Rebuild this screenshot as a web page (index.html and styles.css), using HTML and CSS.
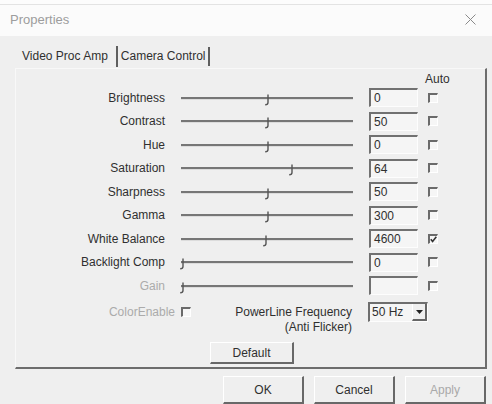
FILE: index.html
```html
<!DOCTYPE html>
<html>
<head>
<meta charset="utf-8">
<link rel="stylesheet" href="styles.css">
</head>
<body>
<div class="window">
  <div class="titlebar">
    <span class="title">Properties</span>
    <svg class="close" width="11" height="11" viewBox="0 0 11 11"><path d="M0.5 0.5 L10.5 10.5 M10.5 0.5 L0.5 10.5" stroke="#8a8a8a" stroke-width="1"/></svg>
  </div>
  <div class="content">
    <div class="tabs">
      <div class="tab tab-active">Video Proc Amp</div>
      <div class="tab tab-inactive">Camera Control</div>
    </div>
    <div class="panel">
      <div class="head">Auto</div>

      <div class="row"><span class="label">Brightness</span><div class="slider"><div class="track"></div><span class="thumb" style="left:83px"><svg width="6" height="12" viewBox="0 0 6 12"><path d="M4 0.5 V8.5 Q4 10.8 1.2 10.8" fill="none" stroke="#555" stroke-width="1.4"/></svg></span></div><div class="field">0</div><span class="check"></span></div>

      <div class="row"><span class="label">Contrast</span><div class="slider"><div class="track"></div><span class="thumb" style="left:83px"><svg width="6" height="12" viewBox="0 0 6 12"><path d="M4 0.5 V8.5 Q4 10.8 1.2 10.8" fill="none" stroke="#555" stroke-width="1.4"/></svg></span></div><div class="field">50</div><span class="check"></span></div>

      <div class="row"><span class="label">Hue</span><div class="slider"><div class="track"></div><span class="thumb" style="left:83px"><svg width="6" height="12" viewBox="0 0 6 12"><path d="M4 0.5 V8.5 Q4 10.8 1.2 10.8" fill="none" stroke="#555" stroke-width="1.4"/></svg></span></div><div class="field">0</div><span class="check"></span></div>

      <div class="row"><span class="label">Saturation</span><div class="slider"><div class="track"></div><span class="thumb" style="left:107px"><svg width="6" height="12" viewBox="0 0 6 12"><path d="M4 0.5 V8.5 Q4 10.8 1.2 10.8" fill="none" stroke="#555" stroke-width="1.4"/></svg></span></div><div class="field">64</div><span class="check"></span></div>

      <div class="row"><span class="label">Sharpness</span><div class="slider"><div class="track"></div><span class="thumb" style="left:83px"><svg width="6" height="12" viewBox="0 0 6 12"><path d="M4 0.5 V8.5 Q4 10.8 1.2 10.8" fill="none" stroke="#555" stroke-width="1.4"/></svg></span></div><div class="field">50</div><span class="check"></span></div>

      <div class="row"><span class="label">Gamma</span><div class="slider"><div class="track"></div><span class="thumb" style="left:83px"><svg width="6" height="12" viewBox="0 0 6 12"><path d="M4 0.5 V8.5 Q4 10.8 1.2 10.8" fill="none" stroke="#555" stroke-width="1.4"/></svg></span></div><div class="field">300</div><span class="check"></span></div>

      <div class="row"><span class="label">White Balance</span><div class="slider"><div class="track"></div><span class="thumb" style="left:81px"><svg width="6" height="12" viewBox="0 0 6 12"><path d="M4 0.5 V8.5 Q4 10.8 1.2 10.8" fill="none" stroke="#555" stroke-width="1.4"/></svg></span></div><div class="field">4600</div><span class="check checked"><svg width="7" height="7" viewBox="0 0 7 7"><path d="M0.8 3.2 L2.6 5.4 L6.3 0.8" fill="none" stroke="#333" stroke-width="1.6"/></svg></span></div>

      <div class="row"><span class="label">Backlight Comp</span><div class="slider"><div class="track"></div><span class="thumb" style="left:-2px"><svg width="6" height="12" viewBox="0 0 6 12"><path d="M4 0.5 V8.5 Q4 10.8 1.2 10.8" fill="none" stroke="#555" stroke-width="1.4"/></svg></span></div><div class="field">0</div><span class="check"></span></div>

      <div class="row"><span class="label disabled">Gain</span><div class="slider"><div class="track"></div><span class="thumb" style="left:-2px"><svg width="6" height="12" viewBox="0 0 6 12"><path d="M4 0.5 V8.5 Q4 10.8 1.2 10.8" fill="none" stroke="#555" stroke-width="1.4"/></svg></span></div><div class="field"></div><span class="check"></span></div>

      <div class="misc">
        <span class="cl-label disabled">ColorEnable</span>
        <span class="check cl-check"></span>
        <span class="plabel">PowerLine Frequency<br>(Anti Flicker)</span>
        <div class="combo">
          <span class="combo-text">50 Hz</span>
          <span class="combo-btn"><svg width="7" height="4" viewBox="0 0 7 4"><path d="M0 0 H7 L3.5 4 Z" fill="#222"/></svg></span>
        </div>
      </div>

      <div class="default-wrap"><button class="btn default">Default</button></div>
    </div>

    <div class="actions">
      <button class="btn action">OK</button>
      <button class="btn action">Cancel</button>
      <button class="btn action apply">Apply</button>
    </div>
  </div>
</div>
</body>
</html>
```

FILE: styles.css
```css
html, body {
  margin: 0;
  padding: 0;
  background: #f0f0f0;
}

body {
  font-family: "Liberation Sans", Arial, sans-serif;
  font-size: 12px;
  color: #2f2f2f;
}

.window {
  width: 492px;
  height: 404px;
  overflow: hidden;
  box-sizing: border-box;
  background: #efefef;
  border-top: 4px solid #fcfcfc;
  display: flex;
  flex-direction: column;
}

.titlebar {
  height: 32px;
  flex: none;
  box-sizing: border-box;
  background: #fbfbfb;
  border-top: 1px solid #e3e3e3;
  display: flex;
  align-items: center;
  justify-content: space-between;
  padding: 0 16px 2px 10px;
}

.title {
  font-size: 13px;
  color: #9d9d9d;
}

.close {
  display: block;
}

.content {
  padding: 8px 5px 0 15px;
}

.tabs {
  display: flex;
  align-items: flex-end;
  height: 24px;
  padding-left: 2px;
}

.tab {
  border-right: 2px solid #5f5f5f;
  white-space: nowrap;
}

.tab-active {
  height: 21px;
  line-height: 21px;
  margin-bottom: 1px;
  padding: 0 8px 0 5px;
}

.tab-inactive {
  height: 19px;
  line-height: 19px;
  margin-bottom: 2px;
  padding: 0 2px 0 3px;
}

.panel {
  height: 301px;
  box-sizing: border-box;
  border-top: 1px solid #f8f8f8;
  border-left: 1px solid #f8f8f8;
  border-right: 2px solid #6d6d6d;
  border-bottom: 2px solid #6d6d6d;
}

.head {
  padding: 4px 0 0 409px;
  line-height: 13px;
  height: 13px;
}

.row {
  display: flex;
  align-items: center;
  height: 23.5px;
}

.label {
  width: 149px;
  text-align: right;
  white-space: nowrap;
}

.disabled {
  color: #ababab;
}

.slider {
  position: relative;
  margin-left: 16px;
  width: 172px;
  height: 12px;
  margin-top: 4px;
}

.track {
  margin-top: 3px;
  height: 2px;
  background: #767676;
  border-bottom: 1px solid #dcdcdc;
}

.thumb {
  position: absolute;
  top: 0;
  display: block;
  line-height: 0;
}

.field {
  margin-left: 16px;
  width: 49px;
  height: 19px;
  box-sizing: border-box;
  border-top: 2px solid #717171;
  border-left: 2px solid #717171;
  border-right: 1px solid #fdfdfd;
  border-bottom: 1px solid #fdfdfd;
  background: #f5f5f5;
  padding-left: 3px;
  line-height: 16px;
  font-size: 12px;
}

.check {
  margin-left: 10px;
  width: 10px;
  height: 10px;
  box-sizing: border-box;
  border-top: 2px solid #6a6a6a;
  border-left: 2px solid #6a6a6a;
  border-right: 1px solid #ffffff;
  border-bottom: 1px solid #ffffff;
  background: #f6f6f6;
  display: flex;
  align-items: center;
  justify-content: center;
  flex: none;
}

.misc {
  display: flex;
  align-items: flex-start;
  margin-top: 4.5px;
}

.cl-label {
  width: 159px;
  text-align: right;
  line-height: 20px;
  white-space: nowrap;
}

.cl-check {
  margin-left: 6px;
  margin-top: 5px;
}

.plabel {
  width: 161px;
  text-align: right;
  line-height: 15px;
  padding-top: 2.5px;
  white-space: nowrap;
}

.combo {
  margin-left: 16px;
  width: 60px;
  height: 20px;
  box-sizing: border-box;
  display: flex;
  border-top: 2px solid #6e6e6e;
  border-left: 2px solid #6e6e6e;
  border-right: 1px solid #fdfdfd;
  border-bottom: 1px solid #fdfdfd;
  background: #f5f5f5;
}

.combo-text {
  flex: 1;
  padding-left: 2px;
  line-height: 17px;
}

.combo-btn {
  width: 15px;
  box-sizing: border-box;
  margin: 0 0 0 0;
  background: #efefef;
  border-left: 1px solid #ffffff;
  border-right: 2px solid #666666;
  border-bottom: 2px solid #666666;
  display: flex;
  align-items: center;
  justify-content: center;
}

.default-wrap {
  display: flex;
  justify-content: center;
  margin-top: 7.5px;
  padding-left: 3px;
}

.btn {
  font-family: "Liberation Sans", Arial, sans-serif;
  font-size: 12px;
  color: #2f2f2f;
  background: #efefef;
  border-top: 1px solid #ffffff;
  border-left: 1px solid #ffffff;
  border-right: 2px solid #686868;
  border-bottom: 2px solid #686868;
  padding: 0;
  margin: 0;
}

.default {
  width: 84px;
  height: 22px;
}

.actions {
  display: flex;
  justify-content: flex-end;
  gap: 10px;
  margin-top: 7px;
  padding-right: 1px;
}

.action {
  width: 81px;
  height: 28px;
}

.apply {
  color: #a9a9a9;
}
```
